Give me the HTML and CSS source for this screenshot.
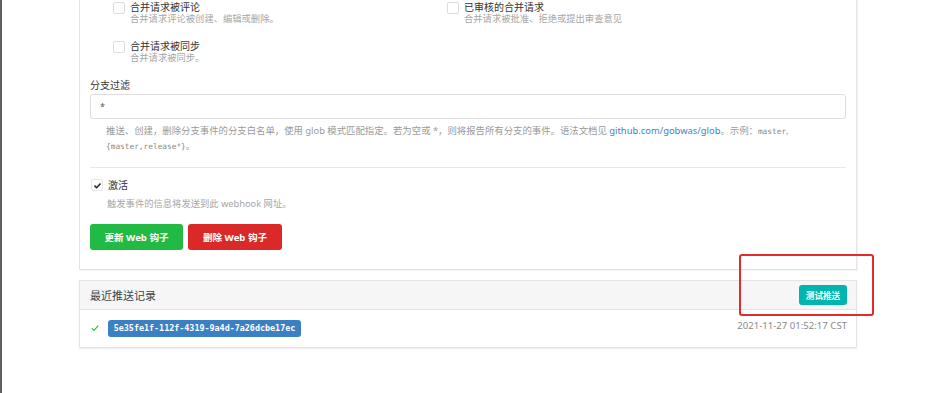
FILE: index.html
```html
<!DOCTYPE html>
<html lang="zh-CN">
<head>
<meta charset="utf-8">
<title>Webhook</title>
<link rel="stylesheet" href="styles.css">
</head>
<body>
<div class="page">
  <div class="segment">
    <div class="events">
      <div class="event">
        <span class="box"></span>
        <div class="event-text">
          <div class="event-title">合并请求被评论</div>
          <div class="event-desc">合并请求评论被创建、编辑或删除。</div>
        </div>
      </div>
      <div class="event">
        <span class="box"></span>
        <div class="event-text">
          <div class="event-title">已审核的合并请求</div>
          <div class="event-desc">合并请求被批准、拒绝或提出审查意见</div>
        </div>
      </div>
      <div class="event">
        <span class="box"></span>
        <div class="event-text">
          <div class="event-title">合并请求被同步</div>
          <div class="event-desc">合并请求被同步。</div>
        </div>
      </div>
    </div>

    <div class="field">
      <label class="field-label">分支过滤</label>
      <div class="input">*</div>
      <p class="help">推送、创建，删除分支事件的分支白名单，使用 glob 模式匹配指定。若为空或 *，则将报告所有分支的事件。语法文档见 <a class="link">github.com/gobwas/glob</a>。示例：<code>master</code>,<br><code>{master,release*}</code>。</p>
    </div>

    <div class="divider"></div>

    <div class="active">
      <div class="active-row">
        <span class="box checked"><svg viewBox="0 0 12 12" width="9" height="9"><path d="M2 6.2 L4.8 9 L10 3.2" fill="none" stroke="#222" stroke-width="2"/></svg></span>
        <span class="active-title">激活</span>
      </div>
      <div class="active-desc">触发事件的信息将发送到此 webhook 网址。</div>
    </div>

    <div class="buttons">
      <button class="btn btn-green">更新 Web 钩子</button>
      <button class="btn btn-red">删除 Web 钩子</button>
    </div>
  </div>

  <div class="deliveries">
    <div class="deliveries-head">
      <span class="head-title">最近推送记录</span>
      <button class="btn-teal">测试推送</button>
    </div>
    <div class="deliveries-body">
      <div class="delivery">
        <svg class="ok" viewBox="0 0 10 10" width="8" height="8"><path d="M1 5.2 L3.8 8 L9 2" fill="none" stroke="#21ba45" stroke-width="1.3"/></svg>
        <span class="uuid">5e35fe1f-112f-4319-9a4d-7a26dcbe17ec</span>
        <span class="date">2021-11-27 01:52:17 CST</span>
      </div>
    </div>
  </div>

  <div class="annotation"></div>
</div>
</body>
</html>
```

FILE: styles.css
```css
* { box-sizing: border-box; }

html, body { height: 100%; }

body {
  margin: 0;
  background: #fff;
  border-left: 2px solid #5f5f5f;
  font-family: "Noto Sans", "Noto Sans CJK SC", sans-serif;
  color: #333;
  overflow: hidden;
}

.page {
  position: relative;
  padding: 0 70px 0 77px;
}

.segment {
  margin-top: -12px;
  border: 1px solid #e4e4e4;
  box-shadow: 1px 1px 1px rgba(0,0,0,0.04);
  padding: 12px 10px 19px 10px;
}

.events {
  display: grid;
  grid-template-columns: 334px 1fr;
  row-gap: 15px;
  padding-left: 23px;
}

.event {
  display: flex;
  gap: 5px;
  align-items: flex-start;
}

.box {
  flex: none;
  width: 12px;
  height: 12px;
  margin-top: 1px;
  border: 1px solid #dcdcdc;
  border-radius: 2px;
  background: #fff;
  display: flex;
  align-items: center;
  justify-content: center;
}

.event-title {
  font-size: 10px;
  line-height: 12px;
  color: #333;
}

.event-desc {
  font-size: 9.3px;
  line-height: 12px;
  color: #a6a6a6;
}

.field { margin-top: 15px; }

.field-label {
  display: block;
  font-size: 10px;
  line-height: 12px;
  color: #333;
  margin-bottom: 3px;
}

.input {
  height: 25px;
  border: 1px solid #dedede;
  border-radius: 3px;
  padding: 6px 9px 0;
  font-size: 9px;
  line-height: 12px;
  color: #555;
}

.help {
  margin: 5px 0 0;
  padding-left: 16px;
  font-size: 9.4px;
  line-height: 14.5px;
  color: #9a9a9a;
}

.link { color: #4183c4; text-decoration: none; }

code {
  font-family: "DejaVu Sans Mono", monospace;
  font-size: 7.8px;
  line-height: 1;
  color: #888;
}

.divider {
  margin-top: 14px;
  border-top: 1px solid #e8e8e8;
}

.active { margin-top: 11px; padding-left: 1px; }

.active-row {
  display: flex;
  align-items: center;
  gap: 5px;
}

.box.checked {
  margin-top: 0;
  border-color: #e6e6e6;
}

.active-title {
  font-size: 10px;
  line-height: 12px;
}

.active-desc {
  margin-top: 7px;
  padding-left: 16px;
  font-size: 9.3px;
  line-height: 12px;
  color: #a6a6a6;
}

.buttons {
  display: flex;
  gap: 5px;
  margin-top: 14px;
}

.btn {
  height: 26px;
  width: 93px;
  border: none;
  border-radius: 3px;
  color: #fff;
  font-family: inherit;
  font-size: 9.6px;
  font-weight: 700;
  padding: 0;
}

.btn-green { background: #21ba45; }
.btn-red { background: #db2828; width: 94px; }

.deliveries {
  margin-top: 10px;
  border: 1px solid #e4e4e4;
  box-shadow: 0 1px 2px rgba(0,0,0,0.07);
}

.deliveries-head {
  height: 29px;
  background: #f6f6f6;
  border-bottom: 1px solid #e4e4e4;
  display: flex;
  align-items: center;
  justify-content: space-between;
  padding: 0 9px 0 10px;
}

.head-title {
  font-size: 11px;
  color: #444;
}

.btn-teal {
  height: 20px;
  width: 48px;
  border: none;
  border-radius: 3px;
  background: #00b5ad;
  color: #fff;
  font-family: inherit;
  font-size: 8.6px;
  font-weight: 700;
  padding: 0;
}

.deliveries-body {
  height: 37px;
  padding: 9px 9px 0 11px;
}

.delivery {
  display: flex;
  align-items: center;
  height: 18px;
}

.ok { flex: none; margin-right: 9px; }

.uuid {
  background: #3c80c4;
  color: #fff;
  border-radius: 3px;
  height: 17px;
  width: 193px;
  display: flex;
  align-items: center;
  justify-content: center;
  font-family: "DejaVu Sans Mono", monospace;
  font-size: 8.4px;
  font-weight: 700;
}

.date {
  margin-left: auto;
  margin-top: -6px;
  font-size: 9.6px;
  color: #8a8a8a;
}

.annotation {
  position: absolute;
  left: 737px;
  top: 266px;
  width: 135px;
  height: 62px;
  border: 2px solid #e42a2a;
  border-radius: 3px;
}
```
